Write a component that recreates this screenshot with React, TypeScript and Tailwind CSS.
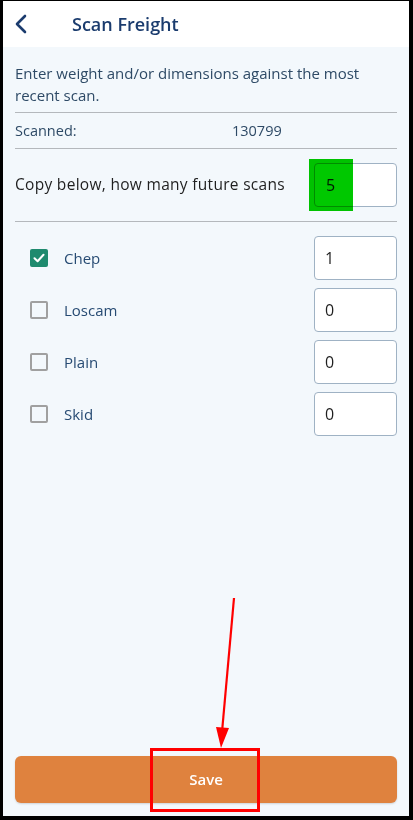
const rows = [
  { name: "Chep", checked: true, qty: "1" },
  { name: "Loscam", checked: false, qty: "0" },
  { name: "Plain", checked: false, qty: "0" },
  { name: "Skid", checked: false, qty: "0" },
];

export default function App() {
  return (
    <div className="relative h-[820px] w-[413px] bg-black pt-[1px] pl-[3px] pr-[4px] pb-[4px] font-['Open_Sans',sans-serif]">
      <div className="flex h-full flex-col bg-[#f3f8fc]">
        {/* HEADER */}
        <div className="flex h-[46px] items-center bg-white">
          <svg className="ml-[11px] h-[20px] w-[14px]" viewBox="0 0 14 20" fill="none">
            <path d="M11 2 L3 10 L11 18" stroke="#1b3c6e" strokeWidth="2.6" strokeLinecap="round" strokeLinejoin="round" />
          </svg>
          <h1 className="ml-[44px] text-[18px] font-semibold text-[#1b3c6e]">Scan Freight</h1>
        </div>

        {/* CONTENT */}
        <div className="flex-1 px-[12px] pt-[15px]">
          <p className="text-[15px] leading-[22px] text-[#2e4a66]">
            Enter weight and/or dimensions against the most recent scan.
          </p>
          <div className="mt-[6px] border-t border-[#b4b8bc]" />
          <div className="flex h-[35px] items-center text-[14.5px] text-[#2e4a66]">
            <span className="w-[217px]">Scanned:</span>
            <span>130799</span>
          </div>
          <div className="border-t border-[#b4b8bc]" />
          <div className="flex h-[72px] items-center justify-between">
            <span className="text-[15.5px] tracking-[0.3px] text-[#1f1f1f]">Copy below, how many future scans</span>
            <div className="flex h-[44px] w-[83px] items-center rounded-[4px] border border-[#9fb2c4] bg-white pl-[11px] text-[16px] text-[#1f1f1f]">
              5
            </div>
          </div>
          <div className="border-t border-[#b4b8bc]" />

          <div className="mt-[14px] flex flex-col gap-[8px]">
            {rows.map((r) => (
              <div key={r.name} className="flex items-center justify-between">
                <div className="flex items-center pl-[15px]">
                  {r.checked ? (
                    <div className="flex h-[18px] w-[18px] items-center justify-center rounded-[2px] bg-[#1e8a6e]">
                      <svg className="h-[14px] w-[14px]" viewBox="0 0 14 14" fill="none">
                        <path d="M2.5 7.2 L5.6 10.2 L11.5 3.8" stroke="white" strokeWidth="2" strokeLinecap="round" strokeLinejoin="round" />
                      </svg>
                    </div>
                  ) : (
                    <div className="h-[18px] w-[18px] rounded-[2px] border-2 border-[#a0a0a0]" />
                  )}
                  <span className="ml-[16px] text-[15px] text-[#274b73]">{r.name}</span>
                </div>
                <div className="flex h-[44px] w-[83px] items-center rounded-[4px] border border-[#9fb2c4] bg-white pl-[10px] text-[16px] text-[#1f1f1f]">
                  {r.qty}
                </div>
              </div>
            ))}
          </div>
        </div>

        {/* SAVE */}
        <div className="px-[12px] pb-[13px]">
          <button className="flex h-[47px] w-full items-center justify-center rounded-[6px] bg-[#df823e] text-[15px] font-semibold text-white shadow-[0_1px_2px_rgba(0,0,0,0.15)]">
            Save
          </button>
        </div>
      </div>

      {/* ANNOTATIONS */}
      <div className="absolute left-[309px] top-[159px] h-[52px] w-[44px] bg-[#00c800] mix-blend-multiply" />
      <div className="absolute left-[150px] top-[748px] h-[64px] w-[110px] border-[3px] border-[#ff0000]" />
      <svg className="absolute left-0 top-0 h-[820px] w-[413px] pointer-events-none" viewBox="0 0 413 820">
        <line x1="234" y1="598" x2="222" y2="732" stroke="#ff0000" strokeWidth="2.2" />
        <polygon points="216,727 229,728 221,748" fill="#ff0000" />
      </svg>
    </div>
  );
}
